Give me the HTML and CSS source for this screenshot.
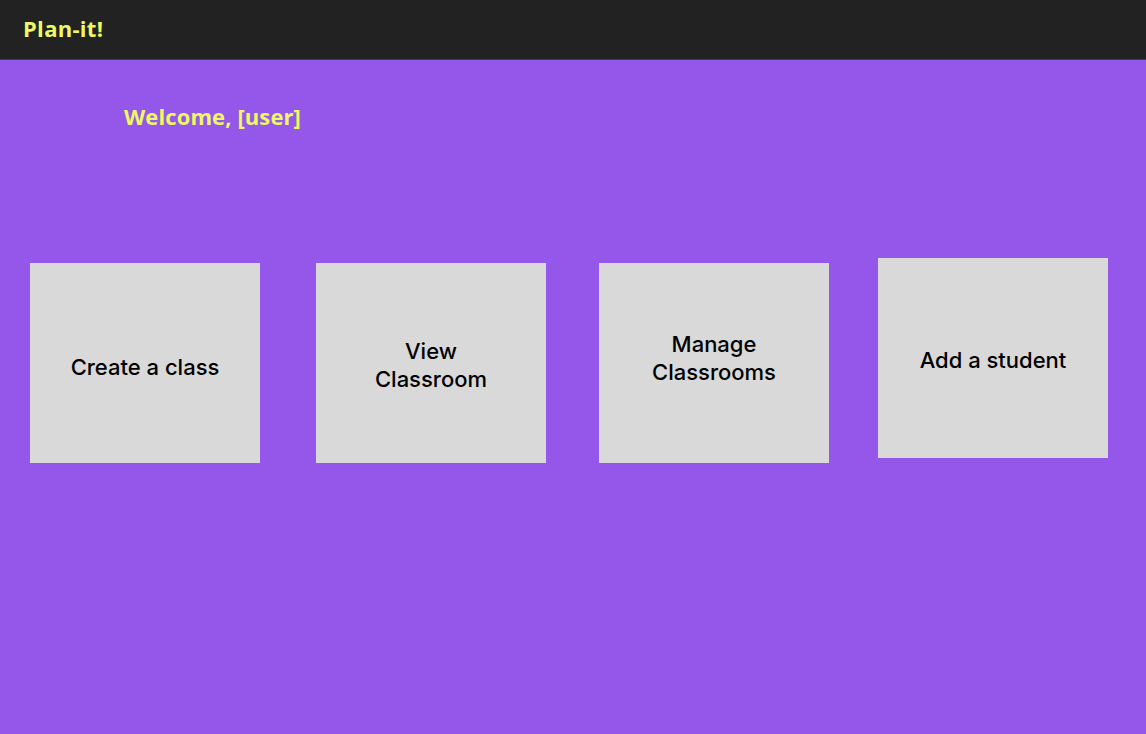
FILE: index.html
```html
<!DOCTYPE html>
<html lang="en">
<head>
<meta charset="utf-8">
<title>Plan-it!</title>
<link rel="stylesheet" href="styles.css">
</head>
<body>
<header class="topbar">
  <div class="logo">Plan-it!</div>
</header>
<main class="content">
  <h1 class="welcome">Welcome, [user]</h1>
  <div class="cards">
    <a class="card card-1">Create a class</a>
    <a class="card card-2">View<br>Classroom</a>
    <a class="card card-3">Manage<br>Classrooms</a>
    <a class="card card-4">Add a student</a>
  </div>
</main>
</body>
</html>
```
FILE: styles.css
```css
html, body {
  margin: 0;
  padding: 0;
  height: 100%;
}
body {
  background: #9457EA;
  font-family: Inter, "Noto Sans", sans-serif;
}
.topbar {
  height: 59px;
  background: #222222;
  border-bottom: 1px solid #4a3370;
  display: flex;
  align-items: center;
  padding-left: 23px;
  box-sizing: content-box;
}
.logo {
  color: #EEF862;
  font-family: "Open Sans", Lato, sans-serif;
  font-weight: 700;
  font-size: 22px;
  letter-spacing: 0.3px;
  margin-top: -4px;
}
.content {
  display: flex;
  flex-direction: column;
}
.welcome {
  margin: 42px 0 0 124px;
  color: #EEF862;
  font-family: "Open Sans", Lato, sans-serif;
  font-weight: 700;
  font-size: 22px;
  line-height: 28px;
  letter-spacing: 0.1px;
}
.cards {
  display: flex;
  align-items: flex-start;
  margin-top: 133px;
  padding-left: 30px;
}
.card {
  width: 230px;
  height: 200px;
  box-sizing: border-box;
  padding-top: 6px;
  background: #D9D9D9;
  display: flex;
  align-items: center;
  justify-content: center;
  text-align: center;
  color: #000;
  font-size: 22px;
  font-weight: 500;
  line-height: 28px;
  flex: none;
}
.card-1 { padding-top: 7px; }
.card-2 { margin-left: 56px; padding-top: 4px; }
.card-3 { margin-left: 53px; padding-top: 0; padding-bottom: 10px; }
.card-4 { margin-left: 49px; margin-top: -5px; padding-top: 4px; }
```
